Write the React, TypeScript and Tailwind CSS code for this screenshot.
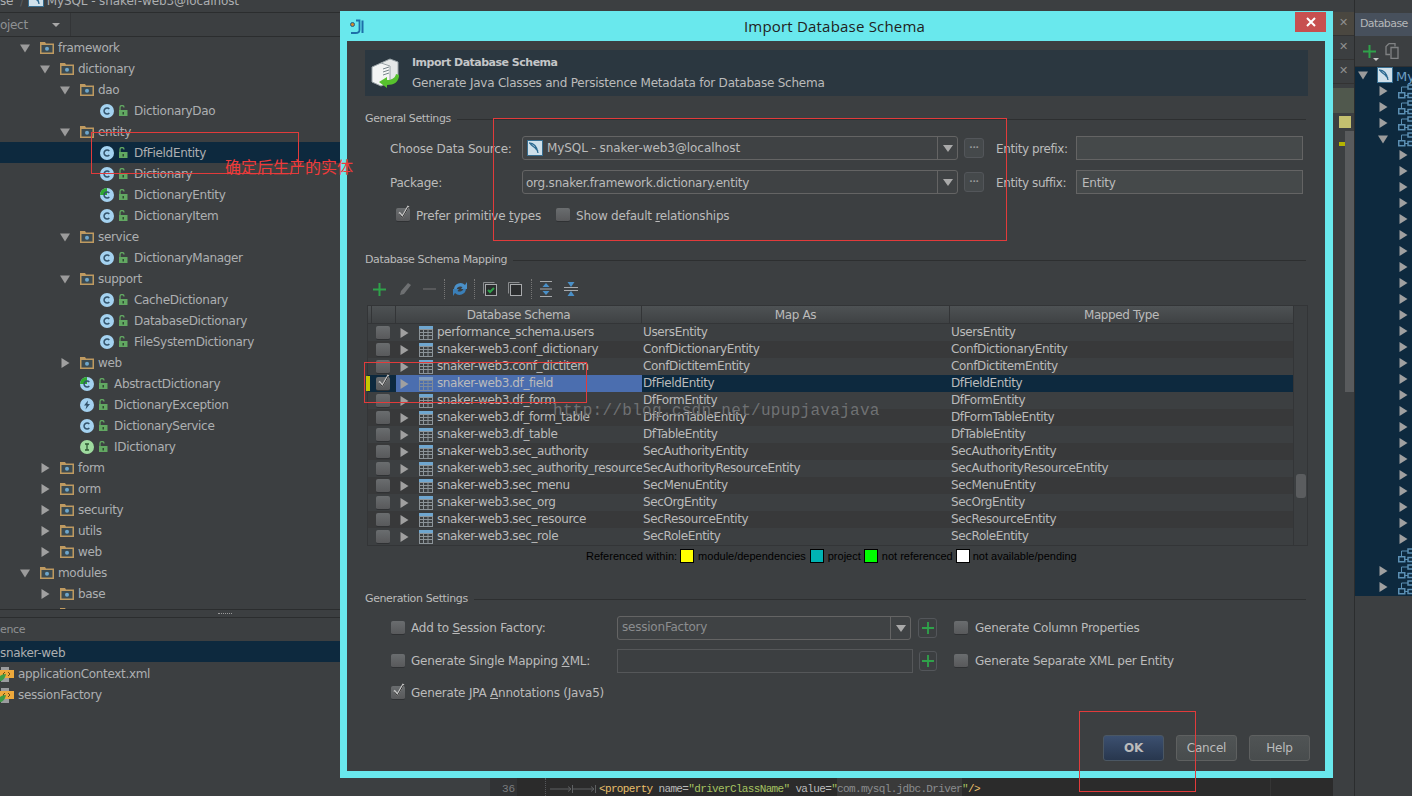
import React from 'react';

const Tri = ({ open, className = '' }: { open?: boolean; className?: string }) => (
  <svg width="10" height="10" viewBox="0 0 10 10" className={className}>
    {open ? <path d="M0 1.500h10L5 9.500z" fill="#9b9b9b" /> : <path d="M1.500 0l8 5-8 5z" fill="#a0a0a0" />}
  </svg>
);

const Folder = () => (
  <svg width="14" height="13" viewBox="0 0 14 13" className="shrink-0">
    <path d="M0 1h5l1 1.500h8V13H0z" fill="#bf9a60" />
    <rect x="1.500" y="4" width="11" height="7.500" fill="#3c4a50" />
    <circle cx="7" cy="7.700" r="2" fill="#6ea6cc" />
  </svg>
);

const Lock = () => (
  <svg width="10" height="11" viewBox="0 0 10 11" className="shrink-0">
    <path d="M2 5V2.500a2 2 0 0 1 4 0" fill="none" stroke="#62a862" strokeWidth="1.300" />
    <rect x="1" y="5" width="8.500" height="6" fill="#62a862" />
    <rect x="4.500" y="7" width="1.500" height="2.500" fill="#2f4a33" />
  </svg>
);

const ClassIcon = ({ kind }: { kind: string }) => (
  <svg width="14" height="14" viewBox="0 0 14 14" className="shrink-0">
    <circle cx="7" cy="7" r="7" fill={kind === 'i' ? '#9fdb9f' : '#a4d2f0'} />
    {kind === 'a' && <path d="M7 7V0a7 7 0 0 0-7 7z" fill="#2fa82f" />}
    {(kind === 'c' || kind === 'a') && (
      <path d="M9.300 5a3 3 0 1 0 0 4" fill="none" stroke="#33536b" strokeWidth="1.500" />
    )}
    {kind === 'e' && <path d="M8 2.500L4 7.500h2.500L5.500 11.500 10 6H7.500z" fill="#33536b" />}
    {kind === 'i' && <path d="M5 4h4M7 4v6M5 10h4" stroke="#2f5a33" strokeWidth="1.300" fill="none" />}
  </svg>
);

const SpringXml = () => (
  <svg width="16" height="15" viewBox="0 0 16 15" className="shrink-0">
    <path d="M3 0h8v5H3zM3 10h8v5H3z" fill="#9a9c9e" />
    <rect x="2" y="3" width="14" height="8" fill="#eda93c" />
    <path d="M7 5l-2 2 2 2M10 5l2 2-2 2" stroke="#6b4a10" fill="none" />
    <path d="M0 14c0-4 3-7 8-7-1 5-4 8-8 7z" fill="#3e9b45" />
  </svg>
);

const MysqlIcon = () => (
  <svg width="16" height="16" viewBox="0 0 16 16" className="shrink-0">
    <rect x="0.500" y="0.500" width="15" height="15" fill="#cfe0ea" stroke="#376d8f" />
    <path d="M2 3c5 0 8 4 9 10M3 3c1 3 4 3 6 6l2 2" fill="none" stroke="#2c6a91" strokeWidth="1.300" />
  </svg>
);

const DbNode = () => (
  <svg width="15" height="15" viewBox="0 0 15 15" className="shrink-0">
    <rect x="0.750" y="8.750" width="6" height="5" fill="none" stroke="#5b8fb3" strokeWidth="1.500" />
    <rect x="10" y="1" width="6" height="4" fill="none" stroke="#5b8fb3" strokeWidth="1.500" />
    <rect x="10" y="9.500" width="6" height="4" fill="none" stroke="#5b8fb3" strokeWidth="1.500" />
    <path d="M3.500 8.500V3h6.500M7 11.500h3" fill="none" stroke="#5b8fb3" />
  </svg>
);

const Plus = ({ size = 13 }: { size?: number }) => (
  <svg width={size} height={size} viewBox="0 0 13 13" className="shrink-0">
    <path d="M6.500 0v13M0 6.500h13" stroke="#2fa24a" strokeWidth="2" />
  </svg>
);

const TableIcon = ({ dim }: { dim?: boolean }) => (
  <svg width="14" height="14" viewBox="0 0 14 14" className="shrink-0">
    <rect x="0" y="0" width="14" height="14" fill={dim ? '#7f8b99' : '#8c9499'} />
    <rect x="0" y="0" width="14" height="3" fill={dim ? '#7f9cc0' : '#6fa6cf'} />
    <path d="M1 4h3v2H1zM5 4h3.500v2H5zM9.500 4H13v2H9.500zM1 7h3v2H1zM5 7h3.500v2H5zM9.500 7H13v2H9.500zM1 10h3v3H1zM5 10h3.500v3H5zM9.500 10H13v3H9.500z" fill={dim ? '#4b6eaf' : '#3c3f41'} />
  </svg>
);

const Check = ({ checked }: { checked?: boolean }) => (
  <span className="relative block w-[14px] h-[14px] shrink-0 rounded-[2px] bg-gradient-to-b from-[#6a6d6f] to-[#58595b] border-b border-[#2f3133]">
    {checked && (
      <svg width="16" height="16" viewBox="0 0 16 16" className="absolute -top-[3px] left-0">
        <path d="M3 7.500l3.500 4L12.500 1" fill="none" stroke="#c8c8c8" strokeWidth="2" />
        <path d="M3 8.500l3.500 4L12.500 2" fill="none" stroke="#2d2d2d" strokeWidth="1" />
      </svg>
    )}
  </span>
);

const tree = [
  { l: 1, k: 'open', t: 'framework' },
  { l: 2, k: 'open', t: 'dictionary' },
  { l: 3, k: 'open', t: 'dao' },
  { l: 4, k: 'c', t: 'DictionaryDao' },
  { l: 3, k: 'open', t: 'entity' },
  { l: 4, k: 'c', t: 'DfFieldEntity', sel: true },
  { l: 4, k: 'c', t: 'Dictionary' },
  { l: 4, k: 'a', t: 'DictionaryEntity' },
  { l: 4, k: 'c', t: 'DictionaryItem' },
  { l: 3, k: 'open', t: 'service' },
  { l: 4, k: 'c', t: 'DictionaryManager' },
  { l: 3, k: 'open', t: 'support' },
  { l: 4, k: 'c', t: 'CacheDictionary' },
  { l: 4, k: 'c', t: 'DatabaseDictionary' },
  { l: 4, k: 'c', t: 'FileSystemDictionary' },
  { l: 3, k: 'closed', t: 'web' },
  { l: 3, k: 'a', t: 'AbstractDictionary' },
  { l: 3, k: 'e', t: 'DictionaryException' },
  { l: 3, k: 'c', t: 'DictionaryService' },
  { l: 3, k: 'i', t: 'IDictionary' },
  { l: 2, k: 'closed', t: 'form' },
  { l: 2, k: 'closed', t: 'orm' },
  { l: 2, k: 'closed', t: 'security' },
  { l: 2, k: 'closed', t: 'utils' },
  { l: 2, k: 'closed', t: 'web' },
  { l: 1, k: 'open', t: 'modules' },
  { l: 2, k: 'closed', t: 'base' },
];

const schemaRows = [
  ['performance_schema.users', 'UsersEntity'],
  ['snaker-web3.conf_dictionary', 'ConfDictionaryEntity'],
  ['snaker-web3.conf_dictitem', 'ConfDictitemEntity'],
  ['snaker-web3.df_field', 'DfFieldEntity'],
  ['snaker-web3.df_form', 'DfFormEntity'],
  ['snaker-web3.df_form_table', 'DfFormTableEntity'],
  ['snaker-web3.df_table', 'DfTableEntity'],
  ['snaker-web3.sec_authority', 'SecAuthorityEntity'],
  ['snaker-web3.sec_authority_resource', 'SecAuthorityResourceEntity'],
  ['snaker-web3.sec_menu', 'SecMenuEntity'],
  ['snaker-web3.sec_org', 'SecOrgEntity'],
  ['snaker-web3.sec_resource', 'SecResourceEntity'],
  ['snaker-web3.sec_role', 'SecRoleEntity'],
];

function TreeRow({ row }: { row: (typeof tree)[number] }) {
  const isFolder = row.k === 'open' || row.k === 'closed';
  return (
    <div className={`h-[21px] flex items-center shrink-0 ${row.sel ? 'bg-[#0d293e]' : ''}`} style={{ paddingLeft: row.l * 20 }}>
      {isFolder ? (
        <>
          <span className="w-[20px] flex">
            <Tri open={row.k === 'open'} />
          </span>
          <Folder />
          <span className="ml-[4px]">{row.t}</span>
        </>
      ) : (
        <>
          <span className="w-[20px]" />
          <ClassIcon kind={row.k} />
          <span className="ml-[4px]">
            <Lock />
          </span>
          <span className="ml-[6px]">{row.t}</span>
        </>
      )}
    </div>
  );
}

function LeftPanel() {
  return (
    <div className="w-[340px] shrink-0 flex flex-col overflow-hidden text-[#adafb1] tracking-[-0.32px]">
      <div className="h-[13px] flex items-start shrink-0 border-b border-[#2b2d2e] overflow-hidden leading-[12px]">
        <span className="-mt-[5px]">se</span>
        <span className="ml-[7px] -mt-[5px] text-[#5a5c5e]">/</span>
        <span className="ml-[4px] -mt-[9px]">
          <MysqlIcon />
        </span>
        <span className="ml-[3px] -mt-[5px] tracking-[-0.1px]">MySQL - snaker-web3@localhost</span>
      </div>
      <div className="h-[24px] flex items-center shrink-0 border-b border-[#2b2d2e] bg-[#3c3f41]">
        <span className="text-[#8f9193]">oject</span>
        <span className="ml-[24px] border-l-[4px] border-r-[4px] border-t-[4px] border-l-transparent border-r-transparent border-t-[#a8a8a8]" />
        <span className="ml-[10px] h-full border-l border-[#333537]" />
      </div>
      <div className="h-[572px] shrink-0 overflow-hidden">
        {tree.map((r, i) => (
          <TreeRow key={i} row={r} />
        ))}
        <div className="h-[21px] pl-[60px] pt-[3px]">
          <Folder />
        </div>
      </div>
      <div className="h-[9px] shrink-0 border-t border-b border-[#2b2d2e] flex items-center justify-end pr-[108px]">
        <span className="w-[14px] border-t border-dotted border-[#9a9a9a]" />
      </div>
      <div className="h-[23px] shrink-0 flex items-center text-[#8f9193] text-[11px] pt-[2px]">ence</div>
      <div className="h-[21px] shrink-0 flex items-center bg-[#0d293e] pt-[3px]">snaker-web</div>
      <div className="h-[21px] shrink-0 flex items-center gap-[4px] -ml-[2px] pt-[3px]">
        <SpringXml />
        applicationContext.xml
      </div>
      <div className="h-[21px] shrink-0 flex items-center gap-[4px] -ml-[2px] pt-[3px]">
        <SpringXml />
        sessionFactory
      </div>
    </div>
  );
}

function RightStrip() {
  return (
    <div className="w-[22px] shrink-0 flex flex-col border-r border-[#2b2d2e] pt-[12px]">
      <div className="h-[24px] flex items-center justify-center bg-[#4a4740] text-[#8f8f8f] text-[11px] border-b border-[#333] font-bold">✕</div>
      <div className="h-[24px] flex items-center justify-center text-[#8f8f8f] text-[11px] border-b border-[#333] font-bold">✕</div>
      <div className="h-[24px] flex items-center justify-center text-[#8f8f8f] text-[11px] border-b border-[#333] font-bold">✕</div>
      <div className="h-[25px] mt-[4px] bg-[#50584d]" />
      <div className="w-[12px] h-[12px] mt-[3px] ml-[6px] bg-[#c4c06f]" />
      <div className="relative flex-1">
        <div className="w-[6px] h-[4px] mt-[14px] ml-[6px] bg-[#b3b300]" />
        <div className="absolute right-0 top-[3px] w-[9px] h-[261px] bg-[#595b5d]" />
      </div>
    </div>
  );
}

function RightPanel() {
  const rows: React.ReactNode[] = [];
  const line = (k: number, triX: number | null, open: boolean, iconX: number | null) => (
    <div key={k} className="h-[16px] shrink-0 flex items-center relative">
      {triX !== null && (
        <span className="absolute top-[3px]" style={{ left: triX }}>
          <Tri open={open} />
        </span>
      )}
      {iconX !== null && (
        <span className="absolute top-[1px]" style={{ left: iconX }}>
          <DbNode />
        </span>
      )}
    </div>
  );
  rows.push(
    <div key="db" className="h-[16px] shrink-0 relative">
      <span className="absolute left-[3px] top-[3px]">
        <Tri open />
      </span>
      <span className="absolute left-[22px] top-0">
        <MysqlIcon />
      </span>
      <span className="absolute left-[41px] top-0 text-[#6f9fc4] text-[13px]">My</span>
    </div>,
  );
  for (let i = 0; i < 3; i++) rows.push(line(i + 1, 23, false, 43));
  rows.push(line(4, 23, true, 43));
  for (let i = 0; i < 25; i++) rows.push(line(i + 5, 43, false, null));
  rows.push(line(30, null, false, 43));
  rows.push(line(31, 23, false, 43));
  rows.push(line(32, 23, false, 43));
  return (
    <div className="flex-1 flex flex-col overflow-hidden">
      <div className="h-[13px] shrink-0" />
      <div className="h-[23px] shrink-0 flex items-center pl-[5px] bg-[#47505c] text-[#b5b7b9] text-[11px] tracking-[-0.6px]">Database</div>
      <div className="h-[31px] shrink-0 flex items-center pl-[8px] gap-[9px] border-b border-[#2f3133]">
        <span className="relative">
          <Plus />
          <span className="absolute -right-[3px] -bottom-[3px] border-l-[3px] border-r-[3px] border-t-[3px] border-l-transparent border-r-transparent border-t-[#c8c8c8]" />
        </span>
        <svg width="14" height="16" viewBox="0 0 14 16">
          <path d="M4 .5h6v3M4 .5l-3 3v8h4" fill="none" stroke="#808284" strokeWidth="1.300" />
          <path d="M6 4.500h7v11H6z" fill="none" stroke="#808284" strokeWidth="1.300" />
        </svg>
      </div>
      <div className="h-[529px] shrink-0 bg-[#0d293e] flex flex-col overflow-hidden">{rows}</div>
    </div>
  );
}

function Combo({ children, w }: { children: React.ReactNode; w: string }) {
  return (
    <div className={`${w} h-[24px] shrink-0 flex items-stretch border border-[#646464] rounded-[3px] bg-[#3f4244]`}>
      <div className="flex-1 flex items-center pl-[3px] min-w-0">{children}</div>
      <div className="w-[20px] border-l border-[#646464] flex items-center justify-center">
        <span className="border-l-[5px] border-r-[5px] border-t-[7px] border-l-transparent border-r-transparent border-t-[#a9a9a9]" />
      </div>
    </div>
  );
}

const DotsBtn = () => (
  <div className="w-[20px] h-[20px] shrink-0 rounded-[3px] border border-[#53565a] bg-[#45494b] flex items-center justify-center text-[#999] text-[9px] font-bold leading-none pb-[1px]">
    ···
  </div>
);

const PlusBtn = ({ w = 'w-[19px]' }: { w?: string }) => (
  <div className={`${w} h-[20px] shrink-0 rounded-[3px] border border-[#53565a] flex items-center justify-center`}>
    <Plus size={12} />
  </div>
);

const SectionTitle = ({ children }: { children: string }) => (
  <div className="flex items-center h-[16px] pr-[2px] text-[11px] tracking-[-0.38px]">
    <span>{children}</span>
    <span className="flex-1 ml-[6px] border-t border-[#2d2f30]" />
  </div>
);

function SchemaTable() {
  const cols = 'grid grid-cols-[4px_24px_246px_308px_343px]';
  return (
    <div className="ml-[2px] w-[941px] h-[241px] border border-[#333537] flex tracking-[-0.38px]">
      <div className="w-[925px] flex flex-col">
        <div className={`${cols} h-[18px] shrink-0 bg-gradient-to-b from-[#4e5254] to-[#3f4244] border-b border-[#333537] text-center leading-[18px]`}>
          <span className="border-r border-[#333537]" />
          <span className="border-r border-[#333537]" />
          <span className="border-r border-[#333537]">Database Schema</span>
          <span className="border-r border-[#333537]">Map As</span>
          <span>Mapped Type</span>
        </div>
        {schemaRows.map(([name, mapped], i) => {
          const sel = i === 3;
          return (
            <div key={name} className={`${cols} h-[17px] shrink-0 leading-[17px] ${sel ? 'bg-[#0d293e]' : i % 2 === 1 ? 'bg-[#38393a]' : 'bg-[#3c3f41]'}`}>
              <span className={sel ? 'bg-[#c6c600] -ml-[2px] my-[1px] w-[4px]' : ''} />
              <span className="flex items-center justify-start pl-[4px]">
                <Check checked={sel} />
              </span>
              <span className={`flex items-center pl-[3px] overflow-hidden whitespace-nowrap ${sel ? 'bg-[#4b6eaf]' : ''}`}>
                <Tri className="shrink-0" />
                <span className="w-[10px] shrink-0" />
                <TableIcon dim={sel} />
                <span className="ml-[4px]">{name}</span>
              </span>
              <span className="pl-[1px]">{mapped}</span>
              <span className="pl-[1px]">{mapped}</span>
            </div>
          );
        })}
      </div>
      <div className="flex-1 border-l border-[#333537] relative">
        <div className="absolute left-[2px] top-[168px] w-[10px] h-[24px] rounded-[3px] bg-[#5b5d5f]" />
      </div>
    </div>
  );
}

function Legend() {
  const sw = (c: string) => <span className={`block w-[14px] h-[14px] shrink-0 border border-black ${c}`} />;
  return (
    <div className="ml-[221px] mt-[2px] h-[16px] flex items-center text-black text-[11px] tracking-normal whitespace-nowrap font-['Liberation_Sans',sans-serif]">
      <span>Referenced within:</span>
      <span className="ml-[3px]">{sw('bg-[#ffff00]')}</span>
      <span className="ml-[4px]">module/dependencies</span>
      <span className="ml-[4px]">{sw('bg-[#00b3b3]')}</span>
      <span className="ml-[4px]">project</span>
      <span className="ml-[3px]">{sw('bg-[#00ff00]')}</span>
      <span className="ml-[4px]">not referenced</span>
      <span className="ml-[3px]">{sw('bg-white')}</span>
      <span className="ml-[3px]">not available/pending</span>
    </div>
  );
}

function Toolbar() {
  return (
    <div className="h-[22px] flex items-center pl-[8px] mt-[10px]">
      <Plus />
      <svg width="14" height="14" viewBox="0 0 14 14" className="ml-[12px]">
        <path d="M10 1l3 2-7 9-4 1 1-4z" fill="#6e7072" />
      </svg>
      <span className="ml-[11px] w-[13px] border-t-2 border-[#58595b]" />
      <span className="ml-[8px] h-[20px] border-l border-dotted border-[#777]" />
      <svg width="16" height="16" viewBox="0 0 16 16" className="ml-[7px]">
        <path d="M13 4a6.500 6.500 0 0 0-11 4l2.500.500A4 4 0 0 1 10.500 6L9 8h6V1z" fill="#4a90c8" />
        <path d="M3 12a6.500 6.500 0 0 0 11-4l-2.500-.500A4 4 0 0 1 5.500 10L7 8H1v7z" fill="#3a7fb8" />
      </svg>
      <span className="ml-[6px] h-[20px] border-l border-dotted border-[#777]" />
      <svg width="14" height="14" viewBox="0 0 14 14" className="ml-[8px]">
        <path d="M.5 11.500V.5h11" fill="none" stroke="#8a8c8e" />
        <rect x="2.500" y="2.500" width="11" height="11" fill="#2b2d2e" stroke="#a8aaac" />
        <path d="M5 8l2 2 4-4" fill="none" stroke="#2fa24a" strokeWidth="2" />
      </svg>
      <svg width="14" height="14" viewBox="0 0 14 14" className="ml-[11px]">
        <path d="M.5 11.500V.5h11" fill="none" stroke="#8a8c8e" />
        <rect x="2.500" y="2.500" width="11" height="11" fill="#2b2d2e" stroke="#a8aaac" />
      </svg>
      <span className="ml-[9px] h-[20px] border-l border-dotted border-[#777]" />
      <svg width="14" height="16" viewBox="0 0 14 16" className="ml-[7px]">
        <path d="M1 .5h12M1 15.500h12M1 8h12" stroke="#a8aaac" />
        <path d="M7 2l3.500 4h-7zM7 14l3.500-4h-7z" fill="#4a90c8" />
      </svg>
      <svg width="14" height="16" viewBox="0 0 14 16" className="ml-[11px]">
        <path d="M0 6.500h14M0 9.500h14" stroke="#a8aaac" />
        <path d="M7 6L3.500 1h7zM7 10l3.500 5h-7z" fill="#4a90c8" />
      </svg>
    </div>
  );
}

function Dialog() {
  return (
    <div className="absolute left-[340px] top-[11px] w-[993px] h-[767px] bg-[#69e8ed] flex flex-col">
      <div className="h-[30px] shrink-0 flex items-center relative pl-[10px]">
        <svg width="15" height="15" viewBox="0 0 15 15">
          <circle cx="2.500" cy="5.500" r="2" fill="#d18a2c" stroke="#1d5f8e" />
          <path d="M6 1.500h3.500V11c0 2-2 3-4 3H1" fill="none" stroke="#1d6fa8" strokeWidth="1.800" />
          <path d="M12.500 1.500V14" stroke="#1d6fa8" strokeWidth="2" />
        </svg>
        <span className="absolute left-[-4px] right-0 text-center text-[#222] text-[15px] tracking-[0.2px] font-['Open_Sans',sans-serif]">Import Database Schema</span>
        <span className="absolute right-[7px] top-[1px] w-[31px] h-[20px] bg-[#c75050] flex items-center justify-center">
          <svg width="10" height="10" viewBox="0 0 10 10">
            <path d="M1 1l8 8M9 1l-8 8" stroke="#fff" strokeWidth="2" />
          </svg>
        </span>
      </div>
      <div className="ml-[7px] mr-[8px] h-[730px] bg-[#3c3f41] pl-[18px] pr-[17px] pt-[9px] flex flex-col text-[#bbbbbb] tracking-[-0.22px]">
        <div className="h-[46px] shrink-0 bg-[#2b3740] flex items-center pl-[6px]">
          <svg width="31" height="31" viewBox="0 0 31 31" className="shrink-0">
            <path d="M10 5l9-4 8 3v15l-9 4z" fill="#e5e8e8" stroke="#9aa4a8" />
            <path d="M1 9l9-4 9 3v16l-9 4-9-4z" fill="#f2f4f4" stroke="#98a2a6" />
            <path d="M12 11l6-2M12 14l6-2M12 17l6-2" stroke="#77858b" />
            <path d="M28 17c0 7-5 10-12 10v3l-8-6 8-5v3c5 0 8-2 9-6z" fill="#57c22e" />
          </svg>
          <div className="ml-[10px]">
            <div className="font-bold text-[11px] tracking-[-0.5px] text-[#c4c6c8] leading-[21px]">Import Database Schema</div>
            <div className="leading-[21px]">Generate Java Classes and Persistence Metadata for Database Schema</div>
          </div>
        </div>

        <div className="mt-[15px] -mb-[1px]">
          <SectionTitle>General Settings</SectionTitle>
        </div>
        <div className="flex items-center pl-[25px] mt-[10px] h-[24px]">
          <span className="w-[132px] pt-[2px]">Choose Data Source:</span>
          <Combo w="w-[436px]">
            <span className="ml-[1px]"><MysqlIcon /></span>
            <span className="ml-[4px] tracking-[-0.07px]">MySQL - snaker-web3@localhost</span>
          </Combo>
          <span className="ml-[6px]"><DotsBtn /></span>
          <span className="ml-[12px] w-[80px] pt-[2px] tracking-[-0.4px]">Entity prefix:</span>
          <div className="w-[227px] h-[24px] border border-[#646464] bg-[#45494a]" />
        </div>
        <div className="flex items-center pl-[25px] mt-[10px] h-[24px]">
          <span className="w-[132px] pt-[2px]">Package:</span>
          <Combo w="w-[436px]"><span className="pt-[2px]">org.snaker.framework.dictionary.entity</span></Combo>
          <span className="ml-[6px]"><DotsBtn /></span>
          <span className="ml-[12px] w-[80px] pt-[2px] tracking-[-0.4px]">Entity suffix:</span>
          <div className="w-[227px] h-[24px] border border-[#646464] bg-[#45494a] pl-[5px] leading-[24px]">Entity</div>
        </div>
        <div className="flex items-center pl-[31px] mt-[13px] h-[16px]">
          <Check checked />
          <span className="ml-[6px] w-[140px] pt-[2px]">Prefer primitive <u>t</u>ypes</span>
          <Check />
          <span className="ml-[6px] pt-[2px]">Show default <u>r</u>elationships</span>
        </div>

        <div className="mt-[29px]">
          <SectionTitle>Database Schema Mapping</SectionTitle>
        </div>
        <Toolbar />
        <div className="mt-[5px]">
          <SchemaTable />
        </div>
        <Legend />

        <div className="mt-[27px]">
          <SectionTitle>Generation Settings</SectionTitle>
        </div>
        <div className="flex items-center pl-[26px] mt-[9px] h-[24px]">
          <Check />
          <span className="ml-[6px] w-[206px]">Add to <u>S</u>ession Factory:</span>
          <Combo w="w-[294px]"><span className="ml-[1px] pb-[2px] text-[#8b8d8f]">sessionFactory</span></Combo>
          <span className="ml-[7px]"><PlusBtn /></span>
          <span className="ml-[17px]"><Check /></span>
          <span className="ml-[7px]">Generate Column Properties</span>
        </div>
        <div className="flex items-center pl-[26px] mt-[9px] h-[24px]">
          <Check />
          <span className="ml-[6px] w-[206px]">Generate Single Mapping <u>X</u>ML:</span>
          <div className="w-[296px] h-[24px] border border-[#555759]" />
          <span className="ml-[6px]"><PlusBtn w="w-[18px]" /></span>
          <span className="ml-[17px]"><Check /></span>
          <span className="ml-[7px]">Generate Separate XML per Entity</span>
        </div>
        <div className="flex items-center pl-[26px] mt-[8px] h-[24px]">
          <Check checked />
          <span className="ml-[6px]">Generate JPA <u>A</u>nnotations (Java5)</span>
        </div>

        <div className="flex justify-end gap-[12px] mt-[30px] -mr-[2px]">
          <button className="w-[61px] h-[26px] rounded-[3px] border border-[#4b5763] bg-gradient-to-b from-[#3c5070] to-[#28374e] font-bold text-[#bbb]">OK</button>
          <button className="w-[61px] h-[26px] rounded-[3px] border border-[#5e6060] bg-gradient-to-b from-[#505455] to-[#484c4d]">Cancel</button>
          <button className="w-[61px] h-[26px] rounded-[3px] border border-[#5e6060] bg-gradient-to-b from-[#505455] to-[#484c4d]">Help</button>
        </div>
      </div>
    </div>
  );
}

const Mark = ({ className }: { className: string }) => (
  <div className={`absolute border border-[#e23b3b] pointer-events-none ${className}`} />
);

const TabArrow = () => (
  <svg width="23" height="8" viewBox="0 0 23 8" className="shrink-0">
    <path d="M0 4h21M18 1.500l3 2.500-3 2.500M22.500 0v8" fill="none" stroke="#5f6163" />
  </svg>
);

export default function App() {
  return (
    <div className="relative w-[1412px] h-[796px] overflow-hidden bg-[#3c3f41] text-[12px] font-['DejaVu_Sans',sans-serif] whitespace-nowrap">
      <div className="flex h-full">
        <LeftPanel />
        <div className="flex-1 flex flex-col justify-end">
          <div className="ml-[150px] h-[18px] flex bg-[#2b2b2b] overflow-hidden font-['Liberation_Mono',monospace] text-[11px] leading-[22px]">
            <div className="w-[27px] shrink-0 bg-[#313335] text-[#7a7c7e] pl-[12px] tracking-normal">36</div>
            <div className="w-[29px] shrink-0 border-r border-dotted border-[#55575a]" />
            <div className="flex-1 flex items-center pl-[4px] tracking-[-0.65px] pt-[3px]">
              <TabArrow />
              <TabArrow />
              <span className="ml-[3px] text-[#e8bf6a]">&lt;property</span>
              <span className="text-[#bababa] whitespace-pre"> name=</span>
              <span className="text-[#a5c261]">"driverClassName"</span>
              <span className="text-[#bababa] whitespace-pre"> value=</span>
              <span className="text-[#a5c261]">"</span>
              <span className="text-[#8b8d8f] bg-[#3a3a3a]">com.mysql.jdbc.Driver</span>
              <span className="text-[#a5c261]">"</span>
              <span className="text-[#e8bf6a]">/&gt;</span>
            </div>
            <div className="w-[63px] shrink-0 border-l border-[#353535]" />
          </div>
        </div>
        <RightStrip />
        <div className="w-[57px] shrink-0 flex">
          <RightPanel />
        </div>
      </div>

      <Dialog />

      <div className="absolute left-[553px] top-[399px] text-[#6f7173] text-[16px] tracking-[0.3px] font-['Liberation_Mono',monospace] pointer-events-none">
        http://blog.csdn.net/upupjavajava
      </div>
      <Mark className="left-[91px] top-[132px] w-[208px] h-[42px]" />
      <Mark className="left-[493px] top-[118px] w-[514px] h-[123px]" />
      <Mark className="left-[364px] top-[362px] w-[223px] h-[41px]" />
      <Mark className="left-[1079px] top-[711px] w-[117px] h-[81px]" />
      <div className="absolute left-[225px] top-[157px] text-[#ef3a3a] text-[16px] leading-[18px] font-['Noto_Sans_CJK_SC',sans-serif]">
        确定后生产的实体
      </div>
    </div>
  );
}
